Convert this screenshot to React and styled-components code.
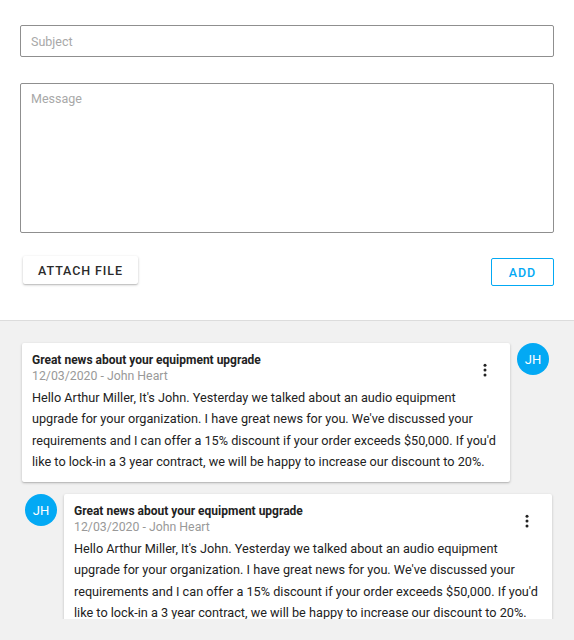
import React from "react";
import styled, { createGlobalStyle } from "styled-components";

const Global = createGlobalStyle`
  html, body { margin: 0; padding: 0; background: #f1f1f1; }
  body { font-family: Roboto, "Liberation Sans", sans-serif; color: rgba(0,0,0,0.87); }
  * { box-sizing: border-box; }
`;

const Page = styled.div`
  width: 574px;
  height: 640px;
  display: flex;
  flex-direction: column;
  overflow: hidden;
`;

const Composer = styled.div`
  background: #fff;
  padding: 25px 20px 0 20px;
  height: 321px;
  border-bottom: 1px solid #dcdcdc;
  display: flex;
  flex-direction: column;
`;

const Field = styled.input`
  width: 100%;
  height: 32px;
  border: 1px solid #8f8f8f;
  border-radius: 2px;
  padding: 0 10px;
  font-family: Roboto, sans-serif;
  font-size: 12.5px;
  color: #333;
  outline: none;
  &::placeholder { color: #a8a8a8; }
`;

const Area = styled.textarea`
  margin-top: 26px;
  width: 100%;
  height: 150px;
  border: 1px solid #8f8f8f;
  border-radius: 2px;
  padding: 7px 10px;
  font-family: Roboto, sans-serif;
  font-size: 12.5px;
  resize: none;
  outline: none;
  &::placeholder { color: #a8a8a8; }
`;

const Actions = styled.div`
  display: flex;
  justify-content: space-between;
  align-items: flex-start;
  margin-top: 23px;
  padding-left: 3px;
`;

const Button = styled.button`
  height: 28px;
  border-radius: 2px;
  font-family: Roboto, sans-serif;
  font-weight: 500;
  font-size: 12.5px;
  letter-spacing: 0.9px;
  text-transform: uppercase;
  cursor: pointer;
  background: #fff;
  padding: 0;
  width: ${(p) => p.$w}px;
  margin-top: ${(p) => p.$mt || 0}px;
  color: ${(p) => (p.$outlined ? "#03a9f4" : "#2b2b2b")};
  border: ${(p) => (p.$outlined ? "1px solid #03a9f4" : "none")};
  box-shadow: ${(p) =>
    p.$outlined ? "none" : "0 1px 3px rgba(0,0,0,0.2), 0 1px 1px rgba(0,0,0,0.12)"};
`;

const Feed = styled.div`
  height: 298px;
  overflow: hidden;
  padding-top: 22px;
  display: flex;
  flex-direction: column;
  gap: 12px;
`;

const Row = styled.div`
  display: flex;
  flex-direction: ${(p) => (p.$mine ? "row" : "row-reverse")};
  align-items: flex-start;
  gap: 7px;
  padding: ${(p) => (p.$mine ? "0 25px 0 22px" : "0 22px 0 25px")};
`;

const Card = styled.div`
  width: 488px;
  flex: none;
  background: #fff;
  border-radius: 2px;
  box-shadow: 0 1px 3px rgba(0,0,0,0.2), 0 1px 1px rgba(0,0,0,0.1);
  padding: 9px 10px 10px 10px;
`;

const Header = styled.div`
  display: flex;
  justify-content: space-between;
  align-items: center;
`;

const Title = styled.div`
  font-size: 12px;
  font-weight: 700;
  line-height: 16px;
  color: #222;
`;

const Meta = styled.div`
  font-size: 12.3px;
  line-height: 16px;
  color: #999;
`;

const Kebab = styled.div`
  width: 24px;
  height: 24px;
  display: flex;
  align-items: center;
  justify-content: center;
  margin-top: 4px;
  margin-right: 3px;
`;

const Body = styled.p`
  margin: 3px 0 0 0;
  font-size: 12.7px;
  line-height: 21.3px;
  color: #222;
`;

const Avatar = styled.div`
  width: 32px;
  height: 32px;
  flex: none;
  border-radius: 50%;
  background: #03a9f4;
  color: #fff;
  font-size: 13px;
  display: flex;
  align-items: center;
  justify-content: center;
`;

const text =
  "Hello Arthur Miller, It's John. Yesterday we talked about an audio equipment upgrade for your organization. I have great news for you. We've discussed your requirements and I can offer a 15% discount if your order exceeds $50,000. If you'd like to lock-in a 3 year contract, we will be happy to increase our discount to 20%.";

const Dots = () => (
  <svg width="18" height="18" viewBox="0 0 24 24" fill="#222">
    <circle cx="12" cy="5.5" r="2" />
    <circle cx="12" cy="12" r="2" />
    <circle cx="12" cy="18.5" r="2" />
  </svg>
);

const Note = ({ mine }) => (
  <Row $mine={mine}>
    <Card>
      <Header>
        <div>
          <Title>Great news about your equipment upgrade</Title>
          <Meta>12/03/2020 - John Heart</Meta>
        </div>
        <Kebab>
          <Dots />
        </Kebab>
      </Header>
      <Body>{text}</Body>
    </Card>
    <Avatar>JH</Avatar>
  </Row>
);

export default function App() {
  return (
    <Page>
      <Global />
      <Composer>
        <Field placeholder="Subject" />
        <Area placeholder="Message" />
        <Actions>
          <Button $w={115}>Attach file</Button>
          <Button $w={63} $mt={2} $outlined>
            Add
          </Button>
        </Actions>
      </Composer>
      <Feed>
        <Note mine />
        <Note />
      </Feed>
    </Page>
  );
}
